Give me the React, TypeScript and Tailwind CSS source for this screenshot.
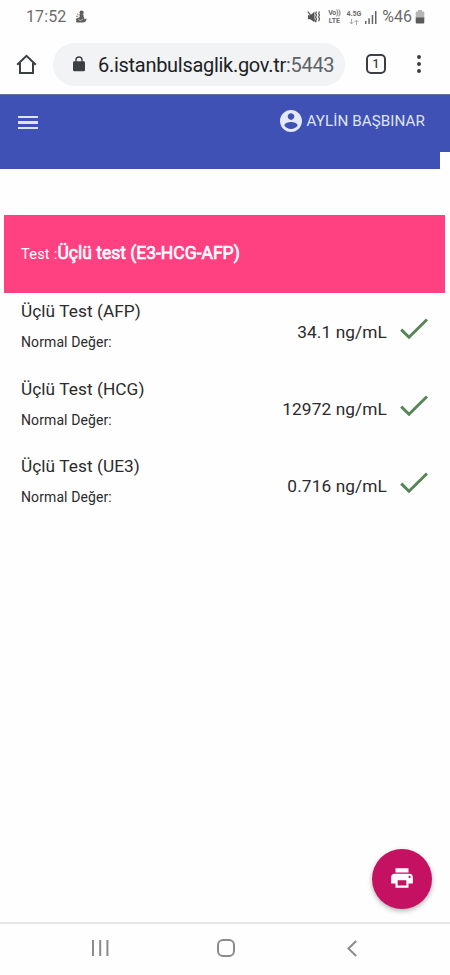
const results = [
  { name: "Üçlü Test (AFP)", value: "34.1 ng/mL" },
  { name: "Üçlü Test (HCG)", value: "12972 ng/mL" },
  { name: "Üçlü Test (UE3)", value: "0.716 ng/mL" },
];

function StatusBar() {
  return (
    <div className="flex h-[34px] items-center pr-[25px] pl-[26px] text-[#6b6b6b]">
      <span className="text-[16px] leading-5 tracking-[0.1px]">17:52</span>
      <svg className="ml-[9px] h-[14px] w-[12px]" viewBox="0 0 12 14" fill="#5c5c5c">
        <circle cx="6.6" cy="2.5" r="2.1" />
        <path d="M4.4 4 8.2 4.2 8.8 7.4C9.6 8 9.6 8.8 9 9.4L11.6 8.6C11.6 11.8 9.5 12.8 7 12.5H3C1.2 12.5.6 11.4 1.4 10.4.4 9 1.4 7.8 3 7.9L4.8 7z" />
        <path d="M3.4 9.4 5.6 10.6 8 9" fill="none" stroke="#e5e5e5" strokeWidth=".7" />
        <path d="M1.8 3.6 3.6 5.2M1 6.2 3.2 6.4" stroke="#888" />
      </svg>
      <div className="ml-auto flex items-center">
        <svg className="h-[14px] w-[14px]" viewBox="0 0 15 14" fill="#555">
          <path d="M1 5h2.5L8 1.4v11.2L3.5 9.5H1z" />
          <path d="M.8 1.3 10 12.5" stroke="#555" strokeWidth="1.2" />
          <path d="m10.2 1.2-1 2 1 1.8-1 2 1 2-1 2.5M13.4 1.2l-1 2 1 1.8-1 2 1 2-1 2.5" fill="none" stroke="#555" strokeWidth="1.3" />
        </svg>
        <div className="ml-[6px] flex w-[14px] flex-col items-center text-[7px] leading-[8px] font-bold">
          <span className="h-[8px] tracking-[-0.3px]">Vo))</span>
          <span className="h-[8px]">LTE</span>
        </div>
        <div className="ml-[5px] flex w-[15px] flex-col items-center">
          <span className="text-[7px] leading-[8px] font-bold">4.5G</span>
          <svg className="mt-px h-[6px] w-[10px]" viewBox="0 0 10 6" fill="none" stroke="#aaa" strokeWidth="1">
            <path d="M2.5 0v5M.5 3l2 2 2-2M7.5 6V1M5.5 3l2-2 2 2" />
          </svg>
        </div>
        <svg className="ml-[4px] h-[13px] w-[12px]" viewBox="0 0 12 13" fill="#666">
          <path d="M0 10h1.5v3H0zM3.3 7.2h1.5V13H3.3zM6.7 4h1.5v9H6.7z M10 0h1.5v13H10z" />
        </svg>
        <span className="ml-[5px] text-[16px] leading-5">%46</span>
        <svg className="ml-[3px] h-[14px] w-[10px]" viewBox="0 0 10 14">
          <path d="M3 0h4v1.5h1.5q.8 0 .8.8V8H.7V2.3q0-.8.8-.8H3z" fill="#b5b5b5" />
          <path d="M.7 7.5h8.6v5q0 1-1 1H1.7q-1 0-1-1z" fill="#5b5b5b" />
        </svg>
      </div>
    </div>
  );
}

function BrowserBar() {
  return (
    <div className="flex h-[60px] items-center pl-[16px]">
      <svg className="h-[21px] w-[21px]" viewBox="0 0 21 21" fill="none" stroke="#3c4043" strokeWidth="2">
        <path d="M1.2 10.8 10.5 1.9l9.3 8.9M4 9v10h13V9" />
      </svg>
      <div className="ml-[16px] flex h-[43px] w-[292px] items-center rounded-full bg-[#f1f3f4] pl-[20px]">
        <svg className="h-[16px] w-[12px]" viewBox="0 0 12 16">
          <rect y="5.3" width="12" height="10" rx="1.4" fill="#3c4043" />
          <path d="M3 6V4a3 3 0 0 1 6 0v2" fill="none" stroke="#3c4043" strokeWidth="1.4" />
        </svg>
        <span className="mt-[2px] ml-[13px] text-[20px] leading-6 tracking-[-0.29px] whitespace-nowrap text-[#202124]">
          6.istanbulsaglik.gov.tr<span className="text-[#5f6368]">:5443</span>
        </span>
      </div>
      <div className="ml-[21px] flex h-[20px] w-[20px] items-center justify-center rounded-[5px] border-2 border-[#3c4043] text-[12px] leading-none font-medium text-[#3c4043]">
        1
      </div>
      <div className="ml-[31px] flex flex-col gap-[2.5px]">
        <i className="size-[4.2px] rounded-full bg-[#3c4043]" />
        <i className="size-[4.2px] rounded-full bg-[#3c4043]" />
        <i className="size-[4.2px] rounded-full bg-[#3c4043]" />
      </div>
    </div>
  );
}

function AppHeader() {
  return (
    <header className="relative flex h-[75.4px] items-start justify-between border-t border-[#6a6fa5] bg-[#3f51b5] pr-[25px] pl-[18px]">
      <div className="mt-[21px] flex flex-col gap-[3px]">
        <i className="h-[2.4px] w-[20px] bg-[#dce5fb]" />
        <i className="h-[2.4px] w-[20px] bg-[#dce5fb]" />
        <i className="h-[2.4px] w-[20px] bg-[#dce5fb]" />
      </div>
      <div className="mt-[15px] flex items-center">
        <svg className="h-[22px] w-[22px]" viewBox="2 2 20 20" fill="#e3e8fb">
          <path d="M12 2C6.48 2 2 6.48 2 12s4.48 10 10 10 10-4.48 10-10S17.52 2 12 2zm0 3c1.66 0 3 1.34 3 3s-1.34 3-3 3-3-1.34-3-3 1.34-3 3-3zm0 14.2c-2.5 0-4.71-1.28-6-3.22.03-1.99 4-3.08 6-3.08 1.99 0 5.97 1.09 6 3.08-1.29 1.94-3.5 3.22-6 3.22z" />
        </svg>
        <span className="ml-[5px] text-[15.2px] leading-[22px] tracking-[0.07px] text-[#dfe4f7]">AYLİN BAŞBINAR</span>
      </div>
      <div className="absolute right-0 bottom-0 h-[17px] w-[10.5px] bg-white" />
    </header>
  );
}

function ResultRow({ name, value }: { name: string; value: string }) {
  return (
    <div className="flex h-[77.2px] items-start pr-[22px] pl-[21px] text-[#2b2b2b]">
      <div className="flex-1">
        <div className="mt-[7px] text-[17.3px] leading-[22px] tracking-[0.05px]">{name}</div>
        <div className="mt-[10px] text-[14px] leading-[20px] tracking-[0.1px]">Normal Değer:</div>
      </div>
      <span className="mt-[27.6px] text-[17.3px] leading-[22px] tracking-[0.1px]">{value}</span>
      <svg className="mt-[24.6px] ml-[13px] h-[22px] w-[28px]" viewBox="0 0 28 22" fill="none" stroke="#588558" strokeWidth="3">
        <path d="M1.2 11.6 9 19.2 27 1.5" />
      </svg>
    </div>
  );
}

function NavigationBar() {
  return (
    <nav className="flex h-[53px] items-center border-t-2 border-[#e6e6e6] pb-[3px] pl-[92px]">
      <svg className="h-[16px] w-[17px]" viewBox="0 0 17 16" fill="#8b8b8b">
        <path d="M0 0h2v16H0zM7.2 0h2v16h-2zM14.4 0h2v16h-2z" />
      </svg>
      <div className="ml-[108px] h-[18px] w-[18px] rounded-[6px] border-2 border-[#8b8b8b]" />
      <svg className="ml-[112px] h-[17px] w-[10px]" viewBox="0 0 10 17" fill="none" stroke="#8b8b8b" strokeWidth="2">
        <path d="M9.2 1 1.4 8.5l7.8 7.5" />
      </svg>
    </nav>
  );
}

export default function App() {
  return (
    <div className="flex h-[975px] w-[450px] flex-col overflow-hidden bg-[#fefefe] font-['Roboto',sans-serif]">
      <StatusBar />
      <BrowserBar />
      <AppHeader />
      <main className="flex flex-1 flex-col pt-[46px]">
        <div className="mr-[5px] ml-[4px] flex h-[78px] items-baseline bg-[#ff4081] pt-[27px] pl-[17px] text-white">
          <span className="text-[14.6px] leading-[22px] tracking-[0.2px]">Test :</span>
          <span className="text-[17.5px] leading-[22px] [-webkit-text-stroke:0.65px_white]">Üçlü test (E3-HCG-AFP)</span>
        </div>
        {results.map((r) => (
          <ResultRow key={r.name} {...r} />
        ))}
        <button className="mt-auto mr-[18px] mb-[13px] flex size-[60px] items-center justify-center self-end rounded-full bg-[#c51162] pb-[2px] shadow-[0_2px_5px_rgba(0,0,0,0.3)]">
          <svg className="h-[26px] w-[26px]" viewBox="0 0 24 24" fill="white">
            <path d="M19 8H5c-1.66 0-3 1.34-3 3v6h4v4h12v-4h4v-6c0-1.66-1.34-3-3-3zm-3 11H8v-5h8v5zm3-7c-.55 0-1-.45-1-1s.45-1 1-1 1 .45 1 1-.45 1-1 1zm-1-9H6v4h12V3z" />
          </svg>
        </button>
      </main>
      <NavigationBar />
    </div>
  );
}
